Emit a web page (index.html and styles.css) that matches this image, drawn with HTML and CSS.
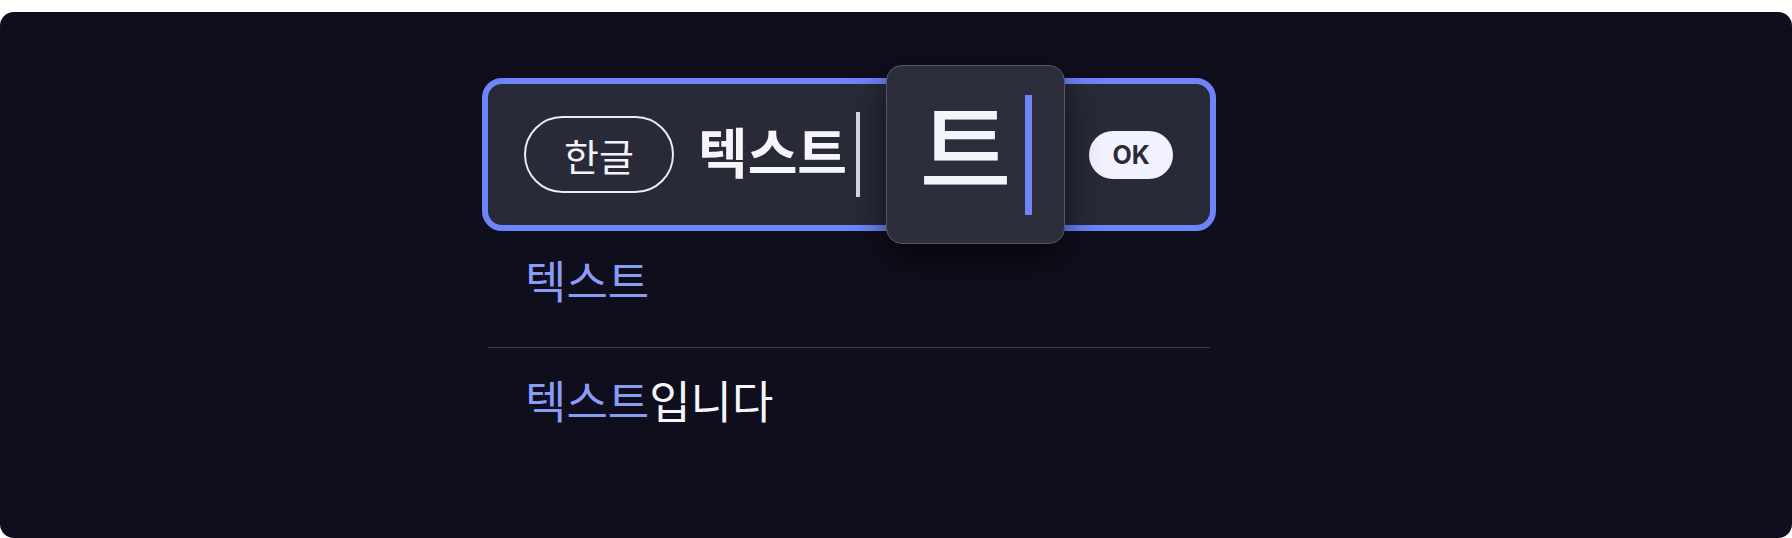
FILE: index.html
```html
<!DOCTYPE html>
<html lang="ko">
<head>
<meta charset="utf-8">
<link rel="stylesheet" href="styles.css">
</head>
<body>
<div class="panel">
  <div class="col">
    <div class="field">
      <span class="chip">한글</span>
      <span class="value">텍스트</span>
      <span class="caret"></span>
      <button class="ok">OK</button>
      <div class="magnifier">
        <span class="mag-glyph">트</span>
        <span class="mag-caret"></span>
      </div>
    </div>
    <div class="suggest first"><span class="hl">텍스트</span></div>
    <div class="divider"></div>
    <div class="suggest second"><span class="hl">텍스트</span>입니다</div>
  </div>
</div>
</body>
</html>
```
FILE: styles.css
```css
html, body {
  margin: 0;
  padding: 0;
  background: #ffffff;
}
body {
  padding-top: 12px;
  font-family: "Noto Sans CJK KR", "Noto Sans", sans-serif;
}
.panel {
  height: 526px;
  box-sizing: border-box;
  background: #0f0e1c;
  border-radius: 14px;
  padding: 66px 0 0 482px;
}
.col {
  width: 734px;
}
.field {
  position: relative;
  display: flex;
  align-items: center;
  height: 153px;
  box-sizing: border-box;
  border: 6px solid #6d84fb;
  border-radius: 20px;
  background: #292a38;
  padding: 0 37px 0 36px;
}
.chip {
  display: flex;
  align-items: center;
  justify-content: center;
  width: 150px;
  height: 77px;
  box-sizing: border-box;
  border: 2px solid #ececf4;
  border-radius: 40px;
  color: #f2f2f8;
  font-size: 38px;
  line-height: 1;
}
.value {
  margin-left: 24px;
  padding-bottom: 8px;
  color: #f5f5fb;
  font-size: 54px;
  font-weight: 700;
  line-height: 1;
}
.caret {
  width: 4px;
  height: 85px;
  margin-left: 9px;
  background: #d9d9e2;
}
.ok {
  margin-left: auto;
  width: 84px;
  height: 48px;
  border: none;
  border-radius: 24px;
  background: #f2f2ff;
  color: #2a2b38;
  font-family: "Inter", "Noto Sans", sans-serif;
  font-weight: 700;
  font-size: 25px;
  padding: 0;
}
.magnifier {
  position: absolute;
  left: 398px;
  top: -19px;
  width: 179px;
  height: 179px;
  box-sizing: border-box;
  border: 1px solid #55566a;
  border-radius: 16px;
  background: #2c2e3b;
  box-shadow: 0 12px 34px rgba(0, 0, 0, 0.6);
  display: flex;
  align-items: center;
  justify-content: center;
  gap: 13px;
}
.mag-glyph {
  color: #f4f4fb;
  font-size: 100px;
  font-weight: 500;
  line-height: 1;
  padding-bottom: 22px;
}
.mag-caret {
  width: 7px;
  height: 120px;
  background: #6d84fb;
}
.suggest {
  padding-left: 43px;
  color: #f5f5fb;
  font-size: 45px;
  line-height: 1;
}
.suggest.first {
  padding-top: 26px;
  padding-bottom: 45px;
}
.suggest.second {
  padding-top: 29px;
}
.hl {
  color: #8a9cf6;
}
.divider {
  height: 1px;
  margin: 0 6px;
  background: #3a3a48;
}
```
